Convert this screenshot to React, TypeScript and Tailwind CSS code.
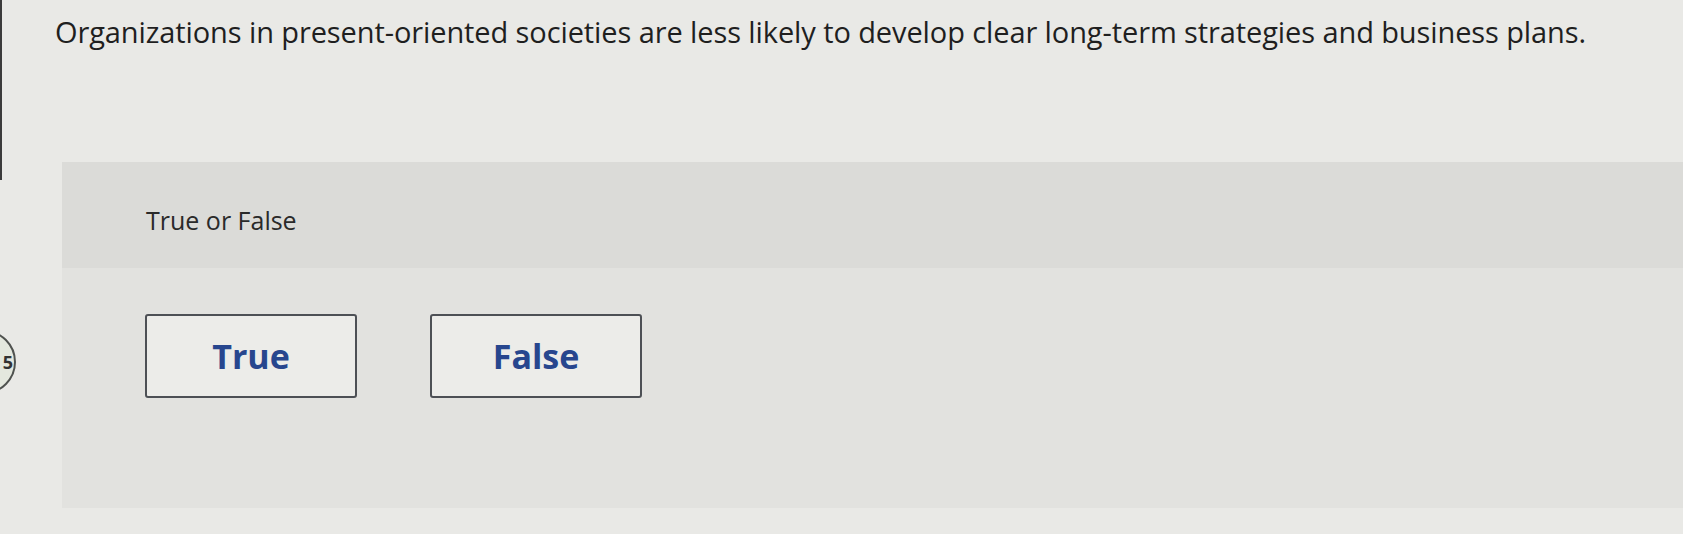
import React from "react";

const font = { fontFamily: "'Open Sans', Lato, sans-serif" };

const ChoiceButton = ({ label }: { label: string }) => (
  <button
    type="button"
    className="w-[212px] h-[84px] rounded-[3px] border-2 border-[#4d5055] bg-[#ecece9] text-[34px] font-bold text-[#27468e] flex items-center justify-center"
  >
    {label}
  </button>
);

export default function App() {
  return (
    <div style={font} className="relative h-[534px] w-full overflow-hidden bg-[#e9e9e6]">
      {/* screen edge */}
      <div className="absolute left-0 top-0 h-[180px] w-[2px] bg-[#3b3b3b]" />

      {/* question number badge, partly off the left edge */}
      <div className="absolute -left-[50px] top-[330px] w-[66px] h-[64px] rounded-full border-2 border-[#4f524f] bg-[#e4e8de] flex items-center justify-end pr-[1px]">
        <span className="text-[18px] font-bold text-[#333]">5</span>
      </div>

      <h1 className="pl-[55px] pt-[12px] text-[29px] leading-[40px] text-[#1f1f1f] tracking-[-0.1px]">
        Organizations in present-oriented societies are less likely to develop clear long-term strategies and
        business plans.
      </h1>

      <section className="ml-[62px] mt-[110px] mb-[22px] flex flex-col">
        <div className="h-[106px] bg-[#dbdbd8] pl-[84px] pt-[42px]">
          <p className="text-[25px] leading-[32px] text-[#2a2a2a]">True or False</p>
        </div>
        <div className="h-[240px] bg-[#e2e2df] pl-[83px] pt-[46px]">
          <div className="flex gap-[73px]">
            <ChoiceButton label="True" />
            <ChoiceButton label="False" />
          </div>
        </div>
      </section>
    </div>
  );
}
